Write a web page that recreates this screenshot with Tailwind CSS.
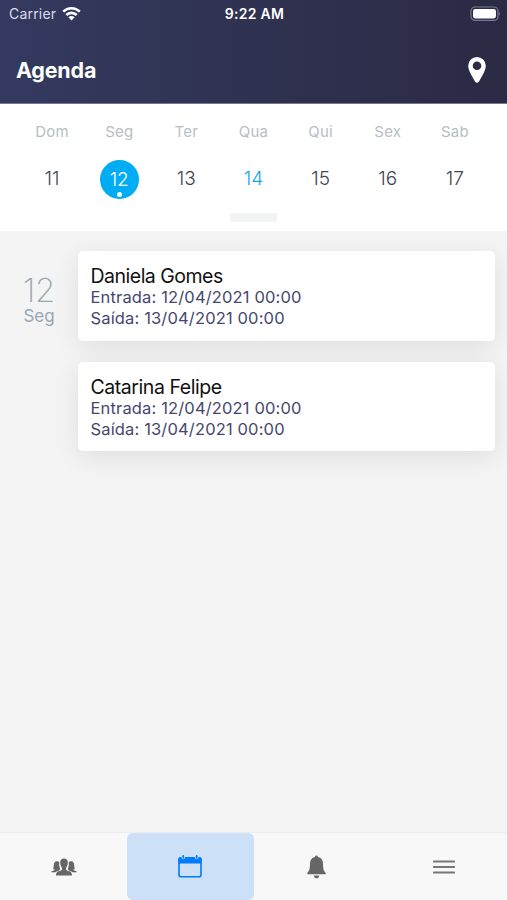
<!DOCTYPE html>
<html lang="pt">
<head>
    <meta charset="UTF-8">
    <title>Agenda</title>
    <script src="https://cdn.jsdelivr.net/npm/@tailwindcss/browser@4"></script>
</head>
<body class="bg-[#f4f4f4] font-['Inter','Liberation_Sans',sans-serif]">
    <div class="flex flex-col w-full h-[900px] overflow-hidden">
        <!-- Header -->
        <header class="relative z-10 h-[104px] shrink-0 border-b border-[#77759a] bg-linear-to-r from-[#343a60] via-[#2f3250] to-[#2b2a45] text-white">
            <div class="grid grid-cols-3 items-center h-7 pl-[9px] pr-[6px]">
                <div class="flex items-center gap-[6px] -mt-[2px] text-[14px] tracking-[0.2px] text-[#dcddea]">
                    <span>Carrier</span>
                    <svg class="w-[19px] h-[15px]" viewBox="0 0 19 15" fill="none" stroke="#fff" stroke-width="2.6">
                        <path d="M1.2 5.7a11.8 11.8 0 0 1 16.6 0"/>
                        <path d="M4.3 9a7.4 7.4 0 0 1 10.4 0"/>
                        <path d="M9.5 14.4 6.4 11.3a4.4 4.4 0 0 1 6.2 0z" fill="#fff" stroke="none"/>
                    </svg>
                </div>
                <div class="-ml-[1px] -mt-[2px] text-center text-[14px] tracking-[0.3px] font-semibold whitespace-nowrap">9:22 AM</div>
                <svg class="w-[31px] h-4 justify-self-end -mt-[1px]" viewBox="0 0 31 16">
                    <rect x="1" y="1" width="27" height="13.4" rx="4" fill="none" stroke="#77788f" stroke-width="1.2"/>
                    <rect x="3" y="3" width="23" height="9.4" rx="2.3" fill="#fff"/>
                    <path d="M29.3 5.4q1.7 2.3 0 4.6z" fill="#77788f"/>
                </svg>
            </div>
            <div class="flex items-center justify-between h-[76px] pl-4 pr-[21px]">
                <h1 class="text-[21.5px] font-bold tracking-[-0.2px] mt-[9px]">Agenda</h1>
                <svg class="w-[18px] h-[26px] mt-[8px]" viewBox="0 0 18 26" fill="#fff">
                    <path fill-rule="evenodd" d="M9 0a8.8 8.8 0 0 1 8.8 8.8c0 3.2-1.5 6-3 8.9l-3.9 7q-1.9 2.3-3.8 0L3.2 17.7C1.7 14.8.2 12 .2 8.8A8.800 8.800 0 0 1 9 0zm0 4.500a4.300 4.300 0 1 0 0 8.600 4.300 4.300 0 0 0 0-8.600z"/>
                </svg>
            </div>
        </header>

        <!-- Week strip -->
        <section class="relative z-10 h-[127px] shrink-0 bg-white px-[18.5px]">
            <div class="grid grid-cols-7 pt-[18px] text-center text-[15px] tracking-[0.2px] leading-5 text-[#b6bec8]">
                <span>Dom</span>
                <span>Seg</span>
                <span>Ter</span>
                <span>Qua</span>
                <span>Qui</span>
                <span>Sex</span>
                <span>Sab</span>
            </div>
            <div class="grid grid-cols-7 justify-items-center mt-[17px] text-[19px] font-light text-[#3f454e]">
                <span class="h-10 leading-10">11</span>
                <span class="relative w-[39px] h-[39px] mt-[0.5px] rounded-full bg-[#00adf5] text-center leading-[39px] text-white">
                    12
                    <i class="absolute left-[17.5px] bottom-[2px] w-[5px] h-[5px] rounded-full bg-white"></i>
                </span>
                <span class="h-10 leading-10">13</span>
                <span class="h-10 leading-10 text-[#12a5e8]">14</span>
                <span class="h-10 leading-10">15</span>
                <span class="h-10 leading-10">16</span>
                <span class="h-10 leading-10">17</span>
            </div>
            <div class="mx-auto mt-[14px] w-[47px] h-[9px] rounded-xs bg-[#f2f3f3]"></div>
        </section>

        <!-- Agenda items -->
        <main class="flex flex-1">
            <div class="w-[78px] shrink-0 pt-[42px] text-center text-[#9aa7b3]">
                <div class="text-[33px] leading-[35px] font-extralight tracking-[-0.3px]">12</div>
                <div class="text-[17px] leading-[17px]">Seg</div>
            </div>
            <div class="flex flex-col flex-1 gap-[21px] pt-5 pr-3">
                <article class="h-[89.5px] rounded-[5px] bg-white pt-[14px] pl-[12.5px] shadow-[0_6px_26px_rgba(0,0,0,0.09)]">
                    <h2 class="text-[19.5px] leading-[22px] tracking-[-0.5px] text-[#111]">Daniela Gomes</h2>
                    <p class="text-[16.5px] leading-[21px] tracking-[0.15px] text-[#464770]">Entrada: 12/04/2021 00:00</p>
                    <p class="text-[16.5px] leading-[21px] tracking-[0.15px] text-[#464770]">Saída: 13/04/2021 00:00</p>
                </article>
                <article class="h-[89.5px] rounded-[5px] bg-white pt-[14px] pl-[12.5px] shadow-[0_6px_26px_rgba(0,0,0,0.09)]">
                    <h2 class="text-[19.5px] leading-[22px] tracking-[-0.44px] text-[#111]">Catarina Felipe</h2>
                    <p class="text-[16.5px] leading-[21px] tracking-[0.15px] text-[#464770]">Entrada: 12/04/2021 00:00</p>
                    <p class="text-[16.5px] leading-[21px] tracking-[0.15px] text-[#464770]">Saída: 13/04/2021 00:00</p>
                </article>
            </div>
        </main>

        <!-- Tab bar -->
        <nav class="grid grid-cols-4 h-[67px] shrink-0 bg-[#f8f8f8] shadow-[0_-1px_1px_#eeeeef]">
            <a class="flex items-center justify-center pl-px">
                <svg class="w-[26px] h-[18px]" viewBox="0 0 26 18" fill="#666">
                    <g id="side">
                        <path d="M0 14.3C0 12.8 2.8 13 3.5 12 3.9 11.4 2.3 11 2.2 10.4c1-1.6-.2-7 3.500-7.100 1.300 0 2.200.5 2.700 1.300-.5 1.700-.3 3.600.4 5 .5 1.200.2 2.200-.5 2.900-1.300.8-3 .9-3.800 1.800z"/>
                    </g>
                    <use href="#side" transform="matrix(-1 0 0 1 26 0)"/>
                    <path d="M13 .4c2.700 0 3.900 1.700 3.800 4.300 0 1.800-.6 3.500-1.600 4.700-.5 1.500-.3 2.800 1.400 3.400 2.400.7 4.300 1.200 4.400 4.700H5c.1-3.500 2-4 4.400-4.700 1.700-.6 1.900-1.900 1.400-3.400-1-1.200-1.600-2.900-1.600-4.700C9.100 2.100 10.300.4 13 .4z" stroke="#f8f8f8" stroke-width=".5" paint-order="stroke"/>
                </svg>
            </a>
            <a class="flex items-center justify-center ml-[0.5px] rounded-[6px] bg-[#cce0f8]">
                <svg class="w-6 h-[23px]" viewBox="0 0 24 23">
                    <rect x="1" y="2.7" width="22" height="19" rx="2" fill="none" stroke="#007aff" stroke-width="1.6"/>
                    <path d="M.4 8.5V4.2Q.4 2 2.6 2h18.8q2.2 0 2.2 2.2v4.3z" fill="#007aff"/>
                    <path d="M5.3 1v1.5M18.7 1v1.5" stroke="#cce0f8" stroke-width="3.6" stroke-linecap="round"/>
                    <path d="M5.3 .9v1.9M18.7 .9v1.9" stroke="#007aff" stroke-width="1.8" stroke-linecap="round"/>
                </svg>
            </a>
            <a class="flex items-center justify-center">
                <svg class="w-[19px] h-[24px]" viewBox="0 0 19 24" fill="#666">
                    <path d="M9.5 .5q1.4 0 1.5 1.500c3.400.8 4.900 3 5 6.700.1 4.300.4 7 2.700 9.200v1.400H.3v-1.400c2.300-2.200 2.600-4.900 2.700-9.200C3.100 5 4.600 2.800 8 2 8.100 1 8.500.5 9.500.5z"/>
                    <path d="M6.7 20.6h5.6q-.4 2.7-2.8 2.7t-2.8-2.7z"/>
                </svg>
            </a>
            <a class="flex items-center justify-center">
                <svg class="w-[22px] h-[14px]" viewBox="0 0 22 14" stroke="#777" stroke-width="1.9" stroke-linecap="round">
                    <path d="M.9 1.5h20.2M.9 7h20.2M.9 12.5h20.2"/>
                </svg>
            </a>
        </nav>
    </div>
</body>
</html>
